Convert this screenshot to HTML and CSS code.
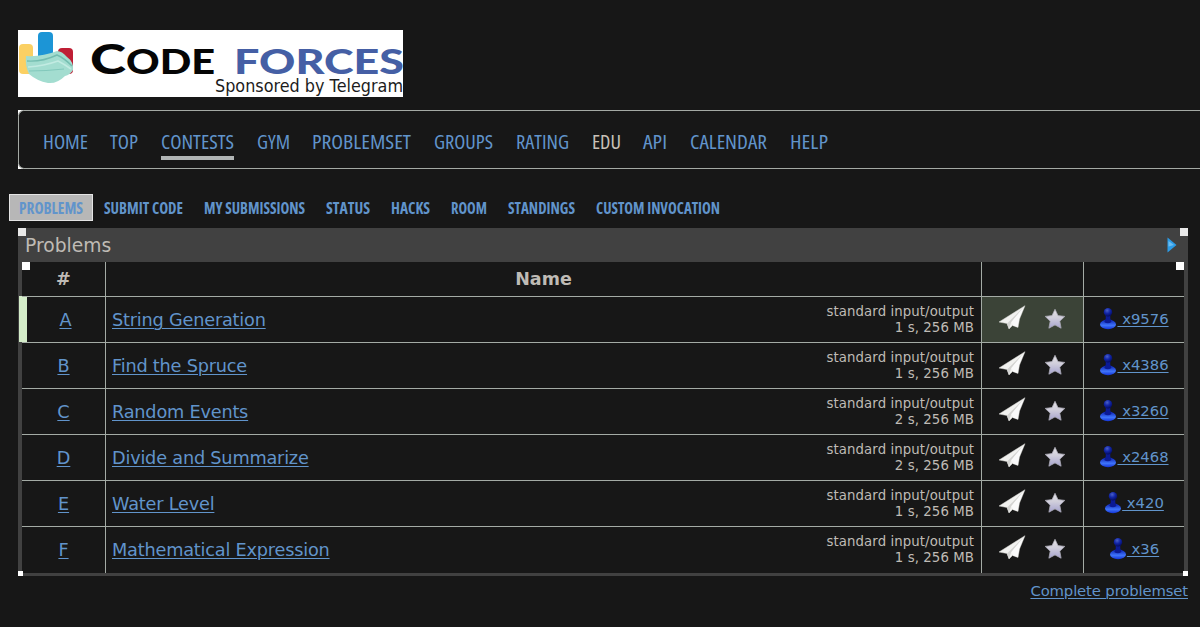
FILE: index.html
```html
<!DOCTYPE html>
<html lang="en">

<head>
    <meta charset="UTF-8">
    <meta name="viewport" content="width=device-width, initial-scale=1.0">
    <title>Problems - Codeforces</title>
    <link rel="stylesheet" href="styles.css">
</head>

<body>
    <!-- Shared icons -->
    <svg class="sprite" width="0" height="0">
        <defs>
            <linearGradient id="starFill" x1="0" y1="0" x2="0" y2="1">
                <stop offset="0" stop-color="#e4e2e4" />
                <stop offset="0.45" stop-color="#d0cedb" />
                <stop offset="1" stop-color="#a6a3cf" />
            </linearGradient>
            <linearGradient id="baseFill" x1="0" y1="0" x2="0" y2="1">
                <stop offset="0" stop-color="#0a1fb0" />
                <stop offset="0.6" stop-color="#3f74fa" />
                <stop offset="1" stop-color="#1233d8" />
            </linearGradient>
            <radialGradient id="headFill" cx="0.4" cy="0.3" r="0.7">
                <stop offset="0" stop-color="#4a60c8" />
                <stop offset="0.5" stop-color="#1226a8" />
                <stop offset="1" stop-color="#050d62" />
            </radialGradient>
            <symbol id="plane" viewBox="0 0 28 26">
                <path d="M1 17 L27 0.7 L21.5 14 L20 22.5 L14.5 20.5 L11 24 L9 18.5 Z" fill="#f1f1ef" stroke="#d2d2ce" stroke-width="0.5" stroke-linejoin="round" />
                <path d="M26 1.8 L9 18.5 L11 24 L13 17.5 Z" fill="#d3d3d1" />
                <path d="M26 1.8 L13.5 17 L15 20.5 L19.6 22 L21 14 Z" fill="#fafafa" />
            </symbol>
            <symbol id="star" viewBox="0 0 22 22">
                <path d="M11 1.3 L14 7.6 L20.8 8.4 L15.8 13.2 L17.1 20.2 L11 16.9 L4.9 20.2 L6.2 13.2 L1.2 8.4 L8 7.6 Z" fill="url(#starFill)" stroke="#aaa8b4" stroke-width="0.8" stroke-linejoin="round" />
            </symbol>
            <symbol id="user" viewBox="0 0 18 23">
                <ellipse cx="9" cy="17.4" rx="8" ry="4.8" fill="url(#baseFill)" />
                <path d="M6.8 8 H11.2 Q10.8 12 12.5 15 Q8.8 17.5 5.2 15 Q7.4 12 6.8 8 Z" fill="#0b1a94" />
                <circle cx="9" cy="5.2" r="4.2" fill="url(#headFill)" />
            </symbol>
        </defs>
    </svg>

    <!-- Logo -->
    <div class="logo">
        <svg width="385" height="67" viewBox="0 0 385 67">
            <rect x="1" y="14" width="14" height="30" rx="4" fill="#fbd063" />
            <rect x="20" y="2" width="15" height="38" rx="4" fill="#1c95d6" />
            <rect x="40" y="18" width="15" height="26" rx="4" fill="#bf1e35" />
            <path d="M8 26 Q24 27 39 21 Q44 21 49 27 Q56 32 55 40 Q52 45 47 46 Q39 54 30 53 Q19 51 11 44 Q7 36 8 26 Z" fill="#a3ddd0" />
            <path d="M9 31 Q24 32 39 25 Q46 28 54 36" fill="none" stroke="#74bdb0" stroke-width="1.4" />
            <path d="M10 37 Q26 36 40 31 Q46 34 53 39" fill="none" stroke="#c2ebe2" stroke-width="1.6" />
            <path d="M11 41 Q28 41 46 39" fill="none" stroke="#82c8bb" stroke-width="1.2" />
            <text class="logo-name" x="72" y="44" font-size="41" textLength="36" lengthAdjust="spacingAndGlyphs">C</text>
            <text class="logo-name" x="108" y="44" font-size="34" textLength="89" lengthAdjust="spacingAndGlyphs">ODE</text>
            <text class="logo-name blue" x="216" y="44" font-size="34" textLength="170" lengthAdjust="spacingAndGlyphs">FORCES</text>
            <text class="logo-sponsor" x="197" y="62" textLength="188" lengthAdjust="spacingAndGlyphs">Sponsored by Telegram</text>
        </svg>
    </div>

    <!-- Main menu -->
    <div class="menu-box">
        <i class="corner menu-tl"></i>
        <i class="corner menu-bl"></i>
        <ul class="menu">
            <li><svg width="45" height="30"><text y="22" textLength="45" lengthAdjust="spacingAndGlyphs">HOME</text></svg></li>
            <li><svg width="28" height="30"><text y="22" textLength="28" lengthAdjust="spacingAndGlyphs">TOP</text></svg></li>
            <li class="current"><svg width="73" height="30"><text y="22" textLength="73" lengthAdjust="spacingAndGlyphs">CONTESTS</text></svg></li>
            <li><svg width="33" height="30"><text y="22" textLength="33" lengthAdjust="spacingAndGlyphs">GYM</text></svg></li>
            <li><svg width="99" height="30"><text y="22" textLength="99" lengthAdjust="spacingAndGlyphs">PROBLEMSET</text></svg></li>
            <li><svg width="59" height="30"><text y="22" textLength="59" lengthAdjust="spacingAndGlyphs">GROUPS</text></svg></li>
            <li><svg width="53" height="30"><text y="22" textLength="53" lengthAdjust="spacingAndGlyphs">RATING</text></svg></li>
            <li class="edu"><svg width="29" height="30"><text y="22" textLength="29" lengthAdjust="spacingAndGlyphs">EDU</text></svg></li>
            <li><svg width="24" height="30"><text y="22" textLength="24" lengthAdjust="spacingAndGlyphs">API</text></svg></li>
            <li><svg width="77" height="30"><text y="22" textLength="77" lengthAdjust="spacingAndGlyphs">CALENDAR</text></svg></li>
            <li><svg width="38" height="30"><text y="22" textLength="38" lengthAdjust="spacingAndGlyphs">HELP</text></svg></li>
        </ul>
    </div>

    <!-- Contest menu -->
    <ul class="second-menu">
        <li class="selected"><svg width="64" height="25"><text y="19" textLength="64" lengthAdjust="spacingAndGlyphs">PROBLEMS</text></svg></li>
        <li><svg width="79" height="26"><text y="20" textLength="79" lengthAdjust="spacingAndGlyphs">SUBMIT CODE</text></svg></li>
        <li><svg width="101" height="26"><text y="20" textLength="101" lengthAdjust="spacingAndGlyphs">MY SUBMISSIONS</text></svg></li>
        <li><svg width="44" height="26"><text y="20" textLength="44" lengthAdjust="spacingAndGlyphs">STATUS</text></svg></li>
        <li><svg width="39" height="26"><text y="20" textLength="39" lengthAdjust="spacingAndGlyphs">HACKS</text></svg></li>
        <li><svg width="36" height="26"><text y="20" textLength="36" lengthAdjust="spacingAndGlyphs">ROOM</text></svg></li>
        <li><svg width="67" height="26"><text y="20" textLength="67" lengthAdjust="spacingAndGlyphs">STANDINGS</text></svg></li>
        <li><svg width="124" height="26"><text y="20" textLength="124" lengthAdjust="spacingAndGlyphs">CUSTOM INVOCATION</text></svg></li>
    </ul>

    <!-- Problems -->
    <div class="datatable">
        <i class="corner tl"></i>
        <i class="corner tr"></i>
        <i class="corner inner-tl"></i>
        <i class="corner inner-tr"></i>
        <i class="corner bl"></i>
        <i class="corner br"></i>
        <div class="caption">
            <span>Problems</span>
            <svg width="10" height="16" viewBox="0 0 10 16">
                <path d="M0.5 0.5 L9.5 8 L0.5 15.5 Z" fill="#2c9be6" />
                <path d="M1.5 4 L7 8 L1.5 9.5 Z" fill="#6bbcf0" />
            </svg>
        </div>
        <table class="problems">
            <thead>
                <tr>
                    <th class="id">#</th>
                    <th>Name</th>
                    <th class="act"></th>
                    <th class="count"></th>
                </tr>
            </thead>
            <tbody>
                <tr class="accepted">
                    <td class="id"><a href="#">A</a></td>
                    <td><div class="problem"><a href="#">String Generation</a><div class="limits">standard input/output<br>1 s, 256 MB</div></div></td>
                    <td class="act"><div class="icons"><svg class="plane"><use href="#plane" /></svg><svg class="star"><use href="#star" /></svg></div></td>
                    <td class="count"><a href="#"><svg class="user"><use href="#user" /></svg>&nbsp;x9576</a></td>
                </tr>
                <tr>
                    <td class="id"><a href="#">B</a></td>
                    <td><div class="problem"><a href="#">Find the Spruce</a><div class="limits">standard input/output<br>1 s, 256 MB</div></div></td>
                    <td class="act"><div class="icons"><svg class="plane"><use href="#plane" /></svg><svg class="star"><use href="#star" /></svg></div></td>
                    <td class="count"><a href="#"><svg class="user"><use href="#user" /></svg>&nbsp;x4386</a></td>
                </tr>
                <tr>
                    <td class="id"><a href="#">C</a></td>
                    <td><div class="problem"><a href="#">Random Events</a><div class="limits">standard input/output<br>2 s, 256 MB</div></div></td>
                    <td class="act"><div class="icons"><svg class="plane"><use href="#plane" /></svg><svg class="star"><use href="#star" /></svg></div></td>
                    <td class="count"><a href="#"><svg class="user"><use href="#user" /></svg>&nbsp;x3260</a></td>
                </tr>
                <tr>
                    <td class="id"><a href="#">D</a></td>
                    <td><div class="problem"><a href="#">Divide and Summarize</a><div class="limits">standard input/output<br>2 s, 256 MB</div></div></td>
                    <td class="act"><div class="icons"><svg class="plane"><use href="#plane" /></svg><svg class="star"><use href="#star" /></svg></div></td>
                    <td class="count"><a href="#"><svg class="user"><use href="#user" /></svg>&nbsp;x2468</a></td>
                </tr>
                <tr>
                    <td class="id"><a href="#">E</a></td>
                    <td><div class="problem"><a href="#">Water Level</a><div class="limits">standard input/output<br>1 s, 256 MB</div></div></td>
                    <td class="act"><div class="icons"><svg class="plane"><use href="#plane" /></svg><svg class="star"><use href="#star" /></svg></div></td>
                    <td class="count"><a href="#"><svg class="user"><use href="#user" /></svg>&nbsp;x420</a></td>
                </tr>
                <tr>
                    <td class="id"><a href="#">F</a></td>
                    <td><div class="problem"><a href="#">Mathematical Expression</a><div class="limits">standard input/output<br>1 s, 256 MB</div></div></td>
                    <td class="act"><div class="icons"><svg class="plane"><use href="#plane" /></svg><svg class="star"><use href="#star" /></svg></div></td>
                    <td class="count"><a href="#"><svg class="user"><use href="#user" /></svg>&nbsp;x36</a></td>
                </tr>
            </tbody>
        </table>
    </div>

    <div class="bottom-link"><a href="#">Complete problemset</a></div>
</body>

</html>
```
FILE: styles.css
```css
body {
    margin: 0;
    padding: 30px 0 0 18px;
    height: 627px;
    box-sizing: border-box;
    overflow: hidden;
    background-color: #171717;
    color: #bfbbb5;
    font-family: Verdana, "DejaVu Sans", sans-serif;
}

a {
    color: #6194cb;
    text-decoration: underline;
    text-decoration-thickness: 1px;
    text-underline-offset: 2px;
}

ul {
    list-style: none;
    margin: 0;
    padding: 0;
    display: flex;
}

.sprite {
    position: absolute;
}

.logo {
    width: 385px;
    height: 67px;
    background-color: #fff;
}

.logo svg,
.menu svg,
.second-menu svg {
    display: block;
    overflow: visible;
}

.logo-name {
    font-family: Lato, sans-serif;
    font-weight: 900;
    fill: #050505;
}

.logo-name.blue {
    fill: #455fa5;
}

.logo-sponsor {
    font-family: "DejaVu Sans", sans-serif;
    font-size: 17px;
    fill: #1c1c1c;
}

/* Main menu */
.menu-box {
    position: relative;
    height: 57px;
    margin-top: 13px;
    border: 1px solid #a4a9a4;
    border-right: none;
    border-radius: 6px 0 0 6px;
}

.menu {
    gap: 22.7px;
    padding: 16px 0 0 23.7px;
}

.menu li {
    height: 29px;
}

.menu text {
    font-family: "Open Sans", sans-serif;
    font-size: 20.5px;
    font-stretch: 75%;
    font-weight: 450;
    fill: #6194cb;
}

.menu .edu text {
    fill: #c8c1b7;
}

.menu .current {
    border-bottom: 4px solid #b1b5b5;
}

/* Contest menu */
.second-menu {
    gap: 21px;
    margin: 25px 0 0 -9px;
    height: 26px;
}

.second-menu .selected {
    background-color: #b7b7b7;
    border: 1px solid #e4e4e4;
    box-sizing: border-box;
    height: 27px;
    padding: 0 9px;
    margin-right: -10px;
}

.second-menu text {
    font-family: "Open Sans", sans-serif;
    font-size: 16.5px;
    font-stretch: 75%;
    font-weight: 700;
    fill: #6194cb;
}

/* Problems table */
.datatable {
    position: relative;
    width: 1170px;
    height: 348px;
    box-sizing: border-box;
    margin-top: 8px;
    padding: 0 4px 3px;
    background-color: #414141;
}

.caption {
    display: flex;
    justify-content: space-between;
    align-items: center;
    height: 34px;
    padding: 0 7px 0 3px;
    font-size: 18.7px;
}

.corner {
    position: absolute;
    width: 8px;
    height: 8px;
    background-color: #fff;
}

.tl { left: 0; top: 0; background-color: #e8e8e8; }
.tr { right: 0; top: 0; background-color: #e8e8e8; }
.inner-tl { left: 4px; top: 34px; }
.inner-tr { right: 4px; top: 34px; }
.bl { left: 0; bottom: 0; width: 5px; height: 5px; }
.br { right: 0; bottom: 0; width: 5px; height: 5px; }

.menu-tl,
.menu-bl {
    left: -1px;
    width: 5px;
    height: 5px;
}

.menu-tl {
    top: -1px;
    background: radial-gradient(circle at 100% 100%, transparent 4px, #fff 5px);
}

.menu-bl {
    bottom: -1px;
    background: radial-gradient(circle at 100% 0, transparent 4px, #fff 5px);
}

.problems {
    width: 1162px;
    table-layout: fixed;
    border-spacing: 0;
    background-color: #171717;
}

.problems th {
    height: 34px;
    padding: 0;
    font-size: 17.5px;
    font-weight: bold;
}

.problems td {
    height: 46px;
    padding: 0;
    box-sizing: border-box;
    border-top: 1px solid #a4aba5;
}

.problems tr:last-child td {
    height: 47px;
}

.problems th + th,
.problems td + td {
    border-left: 1px solid #a4aba5;
}

.problems .id {
    width: 83px;
    text-align: center;
    font-size: 17.7px;
}

.problems .act {
    width: 101px;
}

.problems .count {
    width: 100px;
    text-align: center;
    font-size: 14.8px;
}

.problems td.count {
    padding-bottom: 3px;
}

.accepted .id {
    box-shadow: inset 5px 0 #d4edc9, -3px 0 #d4edc9;
    padding-left: 4px;
}

.accepted .act {
    background-color: #3b4337;
}

.problem {
    display: flex;
    justify-content: space-between;
    align-items: center;
    padding: 0 7px 0 6px;
    font-size: 17.7px;
    letter-spacing: -0.2px;
}

.limits {
    text-align: right;
    font-size: 13.3px;
    line-height: 16px;
    letter-spacing: 0.08px;
}

.icons {
    display: flex;
    align-items: center;
    gap: 18px;
    padding: 0 0 2px 16px;
}

.plane {
    width: 28px;
    height: 26px;
    margin-bottom: 2px;
}

.star {
    width: 22px;
    height: 22px;
}

.user {
    width: 18px;
    height: 23px;
    vertical-align: -6px;
}

.bottom-link {
    width: 1170px;
    margin-top: 6px;
    text-align: right;
    font-size: 14.8px;
    letter-spacing: -0.12px;
}
```
